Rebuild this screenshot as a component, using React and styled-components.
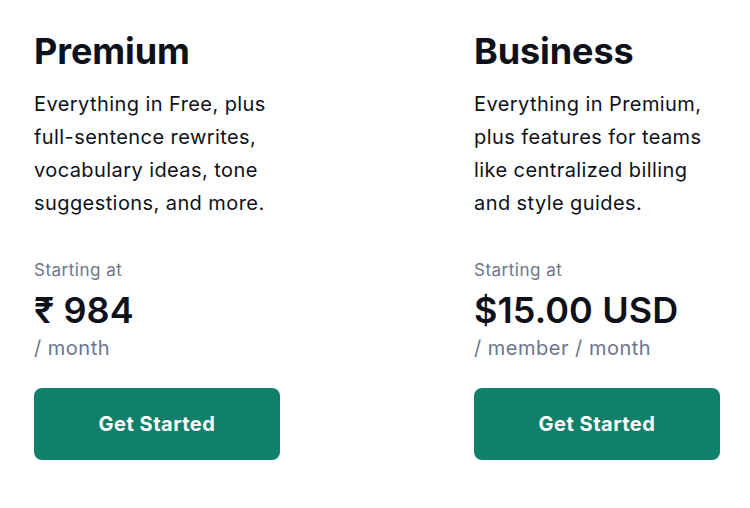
import React from "react";
import styled, { createGlobalStyle } from "styled-components";

const GlobalStyle = createGlobalStyle`
  body {
    margin: 0;
    background: #ffffff;
    font-family: Inter, "Noto Sans", sans-serif;
    -webkit-font-smoothing: antialiased;
  }
`;

const Page = styled.div`
  display: flex;
  gap: 194px;
  padding: 30px 0 0 34px;
`;

const Plan = styled.section`
  width: 246px;
  display: flex;
  flex-direction: column;
`;

const Title = styled.h2`
  margin: 0;
  font-size: 36px;
  line-height: 43px;
  font-weight: 700;
  color: #0e101a;
  letter-spacing: -0.1px;
`;

const Description = styled.p`
  margin: 15px 0 0;
  font-size: 20px;
  line-height: 33px;
  color: #0e101a;
  letter-spacing: 0.42px;
`;

const Starting = styled.div`
  margin-top: 38px;
  font-size: 17px;
  line-height: 24px;
  color: #6d758d;
  letter-spacing: 0.5px;
`;

const Price = styled.div`
  margin-top: 6px;
  font-size: 36px;
  line-height: 44px;
  font-weight: 600;
  color: #0e101a;
  letter-spacing: 0.1px;
`;

const Period = styled.div`
  margin-top: 2px;
  font-size: 20px;
  line-height: 28px;
  color: #6d758d;
  letter-spacing: 0.5px;
`;

const Button = styled.button`
  margin-top: 26px;
  height: 72px;
  width: 100%;
  border: none;
  border-radius: 8px;
  background: #11806a;
  color: #ffffff;
  font-family: inherit;
  font-size: 20px;
  font-weight: 700;
  letter-spacing: 0.5px;
  cursor: pointer;
`;

const plans = [
  {
    name: "Premium",
    text: "Everything in Free, plus full-sentence rewrites, vocabulary ideas, tone suggestions, and more.",
    price: "₹ 984",
    period: "/ month",
  },
  {
    name: "Business",
    text: "Everything in Premium, plus features for teams like centralized billing and style guides.",
    price: "$15.00 USD",
    period: "/ member / month",
  },
];

export default function App() {
  return (
    <>
      <GlobalStyle />
      <Page>
        {plans.map((plan) => (
          <Plan key={plan.name}>
            <Title>{plan.name}</Title>
            <Description>{plan.text}</Description>
            <Starting>Starting at</Starting>
            <Price>{plan.price}</Price>
            <Period>{plan.period}</Period>
            <Button>Get Started</Button>
          </Plan>
        ))}
      </Page>
    </>
  );
}
